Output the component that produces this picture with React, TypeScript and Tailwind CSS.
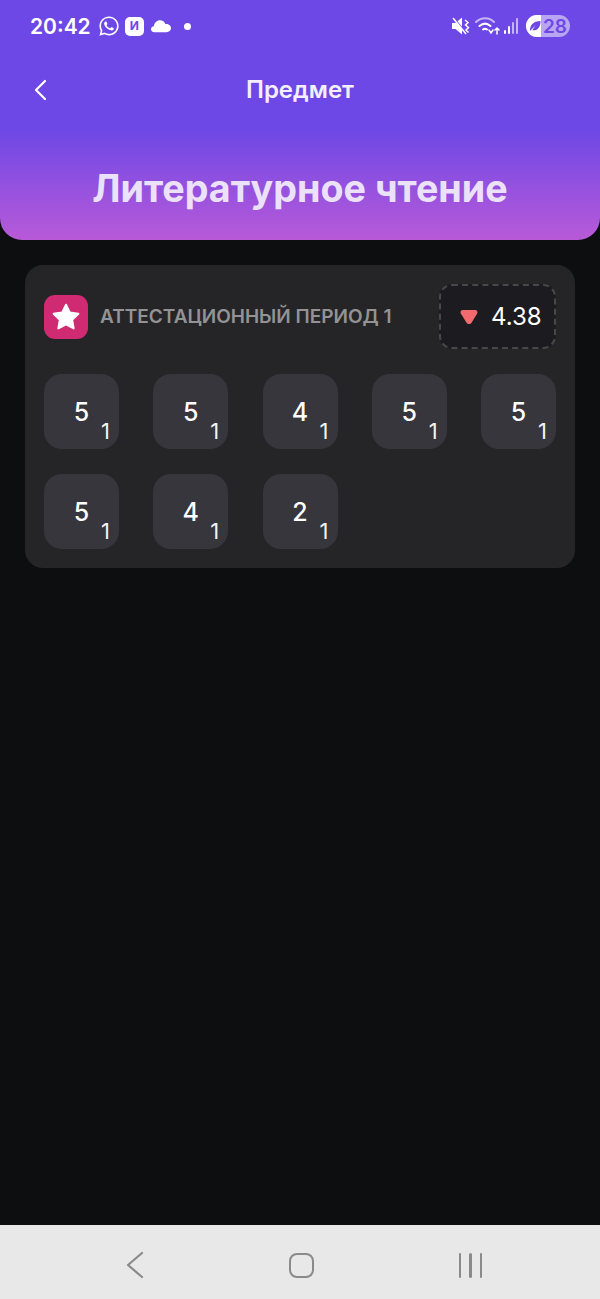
import React from 'react';
import { FaWhatsapp } from 'react-icons/fa';

const marks = ['5', '5', '4', '5', '5', '5', '4', '2'];

const Mark: React.FC<{ value: string }> = ({ value }) => (
  <div className="relative flex h-[75px] w-[75px] items-center justify-center rounded-[18px] bg-[#37363c] text-[25px] font-medium text-white">
    <span className="mt-[2px]">{value}</span>
    <span className="absolute bottom-[6px] right-[9px] text-[22px] leading-[24px] font-normal text-[#f2f2f2]">1</span>
  </div>
);

const StatusBar: React.FC = () => (
  <div className="flex h-[52px] items-center justify-between pl-[30px] pr-[30px] text-white">
    <div className="flex items-center">
      <span className="text-[21px] leading-none font-semibold">20:42</span>
      <FaWhatsapp className="ml-[7px] h-[22px] w-[22px]" />
      <div className="ml-[5px] flex h-[19px] w-[19px] items-center justify-center rounded-[5px] bg-white text-[12px] leading-none font-bold text-[#6e48e6]">
        И
      </div>
      <svg className="ml-[7px] h-[14px] w-[20px]" viewBox="0 0 21 14" fill="white">
        <path d="M3.5 13.5C1.4 13.5 0 12.2 0 10.4 0 8.7 1.3 7.4 3 7.3 3.5 3.6 6.2 1 9.5 1c2.6 0 4.8 1.6 5.6 4 .3 0 .5 0 .8 0 2.8 0 5.1 1.9 5.1 4.4 0 2.400-2 4.100-4.600 4.100z" />
      </svg>
      <div className="ml-[13px] h-[7px] w-[7px] rounded-full bg-white" />
    </div>
    <div className="flex items-center">
      <svg className="h-[20px] w-[18px]" viewBox="0 0 18 20" fill="white">
        <path d="M0 7h3.500L10 1.500V18.500L3.500 13H0z" />
        <path d="M1 1l14 17" stroke="#6e48e6" strokeWidth="1.500" />
        <path d="M1 2l13 16" stroke="white" strokeWidth="1.500" />
        <path d="M13 4l3 2.500-2.500 2.500 3 2.500-2.500 2.500 2.500 2.500" stroke="white" strokeWidth="1.500" fill="none" />
      </svg>
      <svg className="ml-[5px] h-[22px] w-[25px]" viewBox="0 0 25 22" fill="none" stroke="white" strokeWidth="2" strokeLinecap="round">
        <path d="M1 7c5.500-5 13-5 18 0" strokeOpacity="0.6" />
        <path d="M4.500 11c3.500-3 7.500-3 11 0" />
        <path d="M8 14.500c1.500-1.200 2.500-1.200 4 0" />
        <path d="M14 15l2 3 2-3" strokeWidth="1.500" />
        <path d="M22 19v-6M20 15l2-2 2 2" strokeWidth="1.500" />
      </svg>
      <svg className="ml-[4px] h-[18px] w-[15px]" viewBox="0 0 15 18" fill="white">
        <rect x="0" y="13" width="2" height="4" rx="1" />
        <rect x="4" y="9" width="2" height="8" rx="1" />
        <rect x="8" y="5" width="2" height="12" rx="1" fillOpacity="0.6" />
        <rect x="12" y="1" width="2" height="16" rx="1" fillOpacity="0.6" />
      </svg>
      <div className="relative ml-[7px] flex h-[22px] w-[44px] items-center justify-end overflow-hidden rounded-full bg-[#b9a6f3] pr-[3px] text-[19px] leading-none font-semibold text-[#6e48e6]">
        <div className="absolute left-0 top-0 flex h-[22px] w-[15px] items-center justify-center bg-white">
          <svg className="ml-[3px] h-[12px] w-[12px]" viewBox="0 0 13 13" fill="#6e48e6">
            <path d="M1 12C1 5 5 1 12.500 1 12.500 8 9 12 3.500 11L7 6z" />
          </svg>
        </div>
        28
      </div>
    </div>
  </div>
);

const App: React.FC = () => {
  return (
    <div className="flex min-h-[1299px] flex-col bg-[#0d0e10] font-['Inter',sans-serif]">
      <div className="h-[240px] rounded-b-[22px] bg-[linear-gradient(to_bottom,#6e48e6_0px,#6e48e6_130px,#b85ad8_240px)]">
        <StatusBar />
        <div className="relative mt-[17px] flex h-[42px] items-center justify-center">
          <svg className="absolute left-[32px] top-[10px] h-[22px] w-[16px]" viewBox="0 0 16 22" fill="none" stroke="white" strokeWidth="2.200" strokeLinecap="round" strokeLinejoin="round">
            <path d="M13 2L4 11l9 9" />
          </svg>
          <span className="text-[24px] font-semibold text-[#f3effd]">Предмет</span>
        </div>
        <div className="mt-[54px] text-center text-[37.7px] leading-[46px] font-bold text-[#ebe2fa]">Литературное чтение</div>
      </div>

      <div className="mx-[25px] mt-[25px] rounded-[18px] bg-[#252527] p-[19px]">
        <div className="flex items-center justify-between">
          <div className="flex items-center gap-[12px]">
            <div className="flex h-[44px] w-[44px] items-center justify-center rounded-[11px] bg-[#cf2a72]">
              <svg className="h-[32px] w-[32px]" viewBox="0 0 24 24" fill="white" stroke="white" strokeWidth="1.500" strokeLinejoin="round">
                <path d="M12 2.800l2.900 5.900 6.400.9-4.650 4.550 1.100 6.400L12 17.500l-5.750 3.050 1.100-6.400L2.700 9.600l6.400-.9z" />
              </svg>
            </div>
            <span className="pt-[1px] text-[19px] font-semibold text-[#939395]">АТТЕСТАЦИОННЫЙ ПЕРИОД 1</span>
          </div>
          <div className="flex h-[65px] w-[117px] items-center gap-[13px] rounded-[13px] border-2 border-dashed border-[#48484b] bg-[#1c1b20] pl-[19px]">
            <svg className="h-[16px] w-[18px]" viewBox="0 0 18 15" fill="#f26a6e">
              <path d="M3 .5h12c2 0 3 1.800 2.200 3.500l-5.500 9c-1.300 2-4 2-5.300 0L.8 4C0 2.300 1 .5 3 .5z" />
            </svg>
            <span className="text-[24px] font-normal text-white">4.38</span>
          </div>
        </div>
        <div className="mt-[25px] grid grid-cols-[repeat(5,75px)] justify-between gap-y-[25px]">
          {marks.map((m, i) => (
            <Mark key={i} value={m} />
          ))}
        </div>
      </div>

      <div className="mt-auto flex h-[74px] items-center justify-between bg-[#e8e8e8] pb-0 pl-[126px] pr-[118px] pt-[6px]">
        <svg className="h-[28px] w-[18px]" viewBox="0 0 18 28" fill="none" stroke="#8a8a8a" strokeWidth="2.200" strokeLinecap="round" strokeLinejoin="round">
          <path d="M16 2L2 14l14 12" />
        </svg>
        <div className="h-[25px] w-[25px] rounded-[8px] border-[2.5px] border-[#8a8a8a]" />
        <div className="flex h-[25px] gap-[8px]">
          <div className="h-full w-[2.500px] rounded-full bg-[#8a8a8a]" />
          <div className="h-full w-[2.500px] rounded-full bg-[#8a8a8a]" />
          <div className="h-full w-[2.500px] rounded-full bg-[#8a8a8a]" />
        </div>
      </div>
    </div>
  );
};

export default App;
